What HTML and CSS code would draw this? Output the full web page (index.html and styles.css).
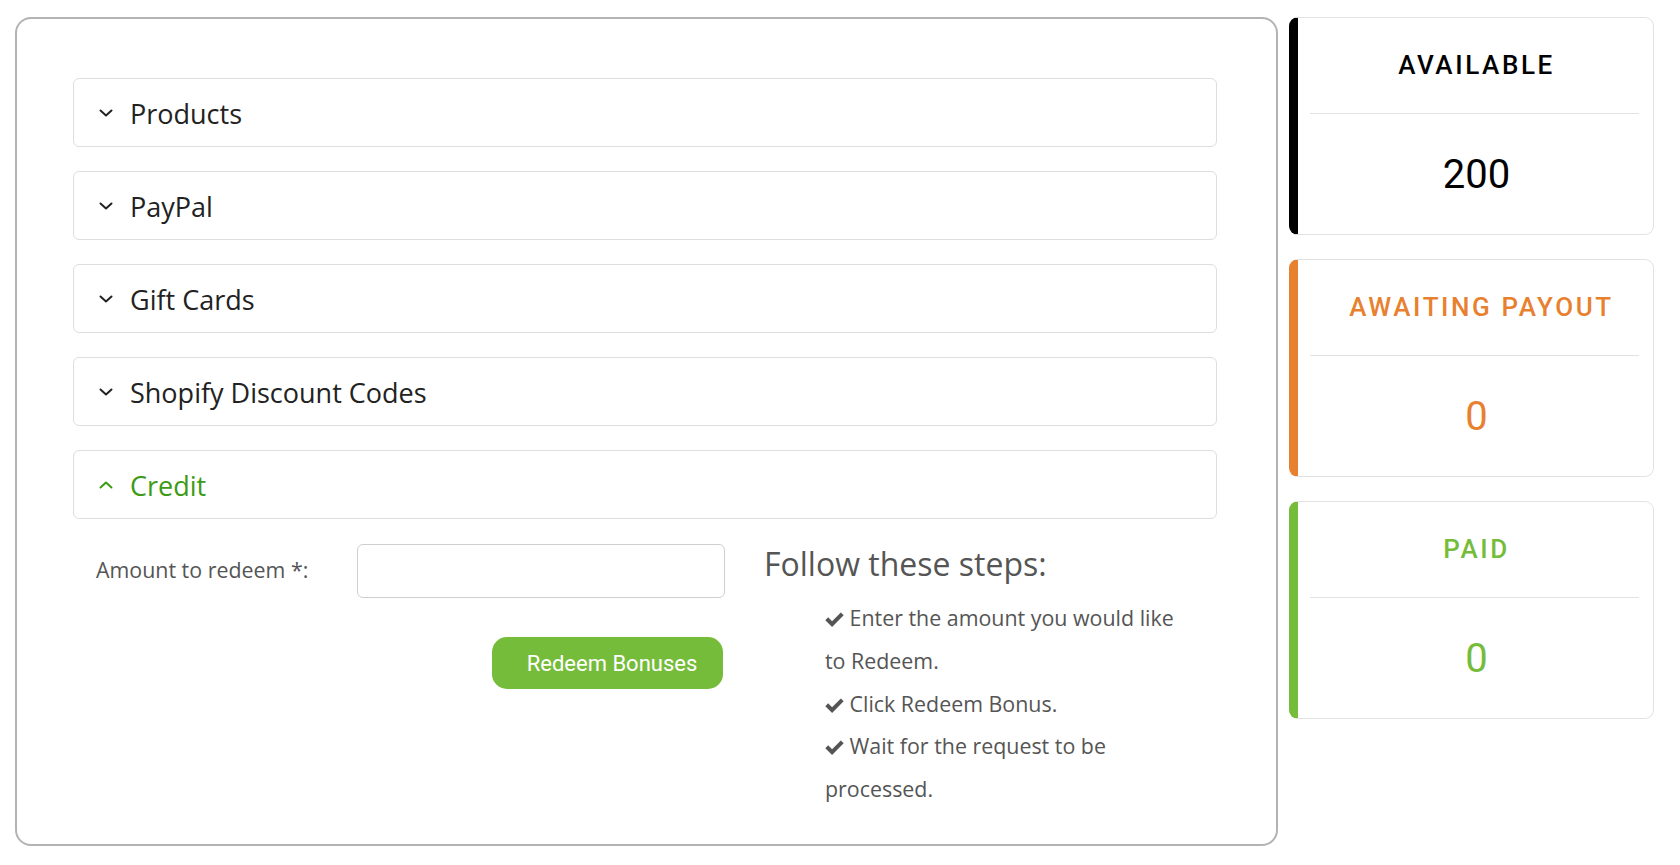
FILE: index.html
```html
<!DOCTYPE html>
<html lang="en">
<head>
<meta charset="utf-8">
<title>Redeem</title>
<link rel="stylesheet" href="styles.css">
</head>
<body>
<div class="page">
  <main class="panel">
    <div class="acc">
      <div class="acc-head">
        <svg class="chev" viewBox="0 0 14 8" width="14" height="8"><polyline points="1.5,1.5 7,6.5 12.5,1.5"/></svg>
        <span class="acc-title">Products</span>
      </div>
    </div>
    <div class="acc">
      <div class="acc-head">
        <svg class="chev" viewBox="0 0 14 8" width="14" height="8"><polyline points="1.5,1.5 7,6.5 12.5,1.5"/></svg>
        <span class="acc-title">PayPal</span>
      </div>
    </div>
    <div class="acc">
      <div class="acc-head">
        <svg class="chev" viewBox="0 0 14 8" width="14" height="8"><polyline points="1.5,1.5 7,6.5 12.5,1.5"/></svg>
        <span class="acc-title">Gift Cards</span>
      </div>
    </div>
    <div class="acc">
      <div class="acc-head">
        <svg class="chev" viewBox="0 0 14 8" width="14" height="8"><polyline points="1.5,1.5 7,6.5 12.5,1.5"/></svg>
        <span class="acc-title">Shopify Discount Codes</span>
      </div>
    </div>
    <div class="acc acc-open">
      <div class="acc-head">
        <svg class="chev" viewBox="0 0 14 8" width="14" height="8"><polyline points="1.5,6.5 7,1.5 12.5,6.5"/></svg>
        <span class="acc-title">Credit</span>
      </div>
    </div>
    <div class="credit-body">
      <div class="form">
        <div class="form-row">
          <label class="form-label" for="amount">Amount to redeem *:</label>
          <input class="form-input" id="amount" type="text">
        </div>
        <div class="btn-row">
          <button class="btn" type="button">Redeem Bonuses</button>
        </div>
      </div>
      <div class="steps">
        <h2 class="steps-title">Follow these steps:</h2>
        <ul class="steps-list">
          <li><svg class="check" viewBox="0 0 18 14" width="19" height="15"><path d="M0.3 7.6 L3 4.9 L6.7 8.6 L15 0.3 L17.7 3 L6.7 14 Z"/></svg> Enter the amount you would like to Redeem.</li>
          <li><svg class="check" viewBox="0 0 18 14" width="19" height="15"><path d="M0.3 7.6 L3 4.9 L6.7 8.6 L15 0.3 L17.7 3 L6.7 14 Z"/></svg> Click Redeem Bonus.</li>
          <li><svg class="check" viewBox="0 0 18 14" width="19" height="15"><path d="M0.3 7.6 L3 4.9 L6.7 8.6 L15 0.3 L17.7 3 L6.7 14 Z"/></svg> Wait for the request to be processed.</li>
        </ul>
      </div>
    </div>
  </main>
  <aside class="side">
    <div class="stat stat-black">
      <div class="stat-label">AVAILABLE</div>
      <div class="stat-value">200</div>
    </div>
    <div class="stat stat-orange">
      <div class="stat-label">AWAITING PAYOUT</div>
      <div class="stat-value">0</div>
    </div>
    <div class="stat stat-green">
      <div class="stat-label">PAID</div>
      <div class="stat-value">0</div>
    </div>
  </aside>
</div>
</body>
</html>
```

FILE: styles.css
```css
* { box-sizing: border-box; }
html, body { margin: 0; padding: 0; background: #fff; }
body {
  font-family: "Open Sans", "Liberation Sans", sans-serif;
  color: #222;
}
.page {
  display: flex;
  align-items: flex-start;
  gap: 11px;
  padding: 17px 0 0 15px;
}
.panel {
  width: 1263px;
  height: 829px;
  border: 2px solid #b3b3b3;
  border-radius: 16px;
  padding: 59px 59px 0 56px;
  display: flex;
  flex-direction: column;
  gap: 24px;
}
.acc {
  border: 1.5px solid #dedede;
  border-radius: 6px;
  height: 69px;
}
.acc-head {
  height: 100%;
  display: flex;
  align-items: center;
  padding-left: 25px;
  gap: 17px;
}
.chev {
  fill: none;
  stroke: #222;
  stroke-width: 2;
  stroke-linecap: round;
  stroke-linejoin: round;
  flex: none;
}
.acc-title {
  font-size: 27px;
  line-height: 36px;
  padding-top: 2px;
  color: #222;
}
.acc-open .acc-title { color: #3d9a14; }
.acc-open .chev { stroke: #3d9a14; }

.credit-body {
  display: grid;
  grid-template-columns: 667px 1fr;
  gap: 24px;
  margin-top: 1px;
}
.form {
  display: flex;
  flex-direction: column;
  gap: 39px;
}
.form-row {
  display: flex;
  align-items: center;
  padding-left: 23px;
}
.form-label {
  width: 261px;
  font-size: 21.4px;
  color: #555;
  padding-bottom: 3px;
}
.form-input {
  width: 368px;
  height: 54px;
  border: 1.5px solid #cfcfcf;
  border-radius: 6px;
  background: #fff;
  font: inherit;
}
.btn-row {
  display: flex;
  justify-content: flex-end;
  padding-right: 17px;
}
.btn {
  height: 52px;
  width: 231px;
  border: none;
  border-radius: 15px;
  background: #76bc3b;
  color: #fff;
  font-family: Roboto, "Liberation Sans", sans-serif;
  font-size: 22px;
  padding: 0 0 0 9px;
  text-align: center;
}
.steps {
  padding-top: 0;
}
.steps-title {
  margin: 0;
  font-size: 32px;
  font-weight: 400;
  color: #555;
  line-height: 40px;
}
.steps-list {
  list-style: none;
  margin: 13px 0 0;
  padding: 0 27px 0 61px;
  font-size: 21.4px;
  color: #555;
  line-height: 42.8px;
}
.check {
  fill: #555;
  vertical-align: -1px;
}

.side {
  width: 365px;
  display: flex;
  flex-direction: column;
  gap: 24px;
}
.stat {
  height: 218px;
  border: 1.5px solid #e2e2e2;
  border-left: 9px solid #000;
  border-radius: 9px;
  padding: 0 14px 0 12px;
  display: flex;
  flex-direction: column;
  font-family: Roboto, "Liberation Sans", sans-serif;
  text-align: center;
}
.stat-label {
  height: 96px;
  line-height: 94px;
  padding-left: 4px;
  border-bottom: 1.5px solid #e2e2e2;
  font-size: 26px;
  font-weight: 500;
  letter-spacing: 2.6px;
}
.stat-orange .stat-label { padding-left: 14px; }
.stat-value {
  flex: 1;
  display: flex;
  align-items: center;
  justify-content: center;
  padding-left: 4px;
  font-size: 40px;
}
.stat-black { border-left-color: #000; color: #000; }
.stat-orange { border-left-color: #e8812f; color: #e8812f; }
.stat-green { border-left-color: #76bc3b; color: #76bc3b; }
```
